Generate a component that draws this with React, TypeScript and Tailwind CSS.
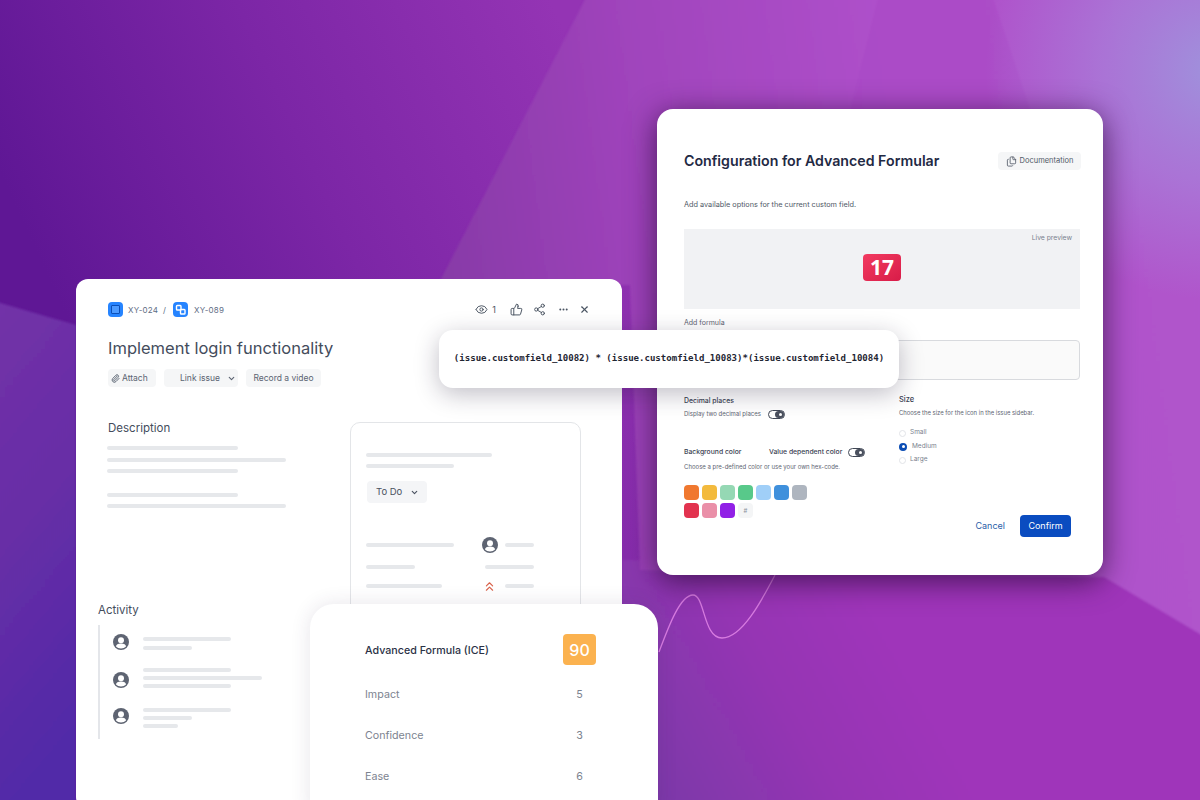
import { ChevronDown, ChevronsUp, Ellipsis, Eye, Files, Paperclip, Share2, ThumbsUp, X } from 'lucide-react';

function Line({ w, className = '' }: { w: string; className?: string }) {
  return <div className={`h-1 rounded-full bg-[#e6e8eb] ${w} ${className}`} />;
}

function Avatar() {
  return (
    <svg viewBox="0 0 16 16" className="w-4 h-4 shrink-0">
      <circle cx="8" cy="8" r="8" fill="#5e6472" />
      <circle cx="8" cy="6.2" r="3" fill="#fff" />
      <path d="M3 12.400c0-2 2-3 5-3s5 1 5 3c-1.200 1.300-3 2-5 2s-3.800-.7-5-2z" fill="#fff" />
    </svg>
  );
}

function Background() {
  return (
    <svg viewBox="0 0 1200 800" className="absolute inset-0 w-[1200px] h-[800px]">
      <defs>
        <linearGradient id="base" gradientUnits="userSpaceOnUse" x1="40" y1="260" x2="560" y2="20">
          <stop offset="0" stopColor="#5f1795" />
          <stop offset="0.5" stopColor="#7c26a6" />
          <stop offset="1" stopColor="#9434b4" />
        </linearGradient>
        <linearGradient id="lowLeft" x1="0" y1="0" x2="0.2" y2="1">
          <stop offset="0" stopColor="#7331a8" />
          <stop offset="0.5" stopColor="#672ea6" />
          <stop offset="1" stopColor="#512aa8" />
        </linearGradient>
        <linearGradient id="upper" gradientUnits="userSpaceOnUse" x1="438" y1="200" x2="1200" y2="100">
          <stop offset="0" stopColor="#883aa8" />
          <stop offset="0.27" stopColor="#a044bc" />
          <stop offset="0.6" stopColor="#ae50ca" />
          <stop offset="1" stopColor="#b055cc" />
        </linearGradient>
        <linearGradient id="lower" gradientUnits="userSpaceOnUse" x1="650" y1="800" x2="900" y2="660">
          <stop offset="0" stopColor="#7b38a8" />
          <stop offset="0.6" stopColor="#9636b4" />
          <stop offset="1" stopColor="#9f34ba" />
        </linearGradient>
        <radialGradient id="blue" gradientUnits="userSpaceOnUse" cx="1215" cy="70" r="230">
          <stop offset="0" stopColor="#9f92dc" />
          <stop offset="0.5" stopColor="#a880da" stopOpacity="0.7" />
          <stop offset="1" stopColor="#a880da" stopOpacity="0" />
        </radialGradient>
        <filter id="soft">
          <feGaussianBlur stdDeviation="1" />
        </filter>
      </defs>
      <rect width="1200" height="800" fill="url(#base)" />
      <g filter="url(#soft)">
        <polygon points="-10,300 76,325 76,810 -10,810" fill="url(#lowLeft)" />
        <rect x="622" y="560" width="590" height="250" fill="url(#lower)" />
        <polygon points="438,285 590,-10 1210,-10 1210,640 1104,577 640,570 630,285" fill="url(#upper)" />
        <polygon points="880,-10 850,110 1030,110 990,-10" fill="#a746c4" opacity="0.35" />
      </g>
      <rect x="940" y="0" width="260" height="320" fill="url(#blue)" />
      <path d="M659 652C668 628 680 595 693 595C705 595 703 638 722 638C742 638 762 600 775 575" fill="none" stroke="#d77be0" strokeWidth="1.300" />
    </svg>
  );
}

function IssueCard() {
  return (
    <div className="absolute left-[76px] top-[279px] w-[546px] h-[530px] rounded-xl bg-white font-['Inter',sans-serif] text-[#42526e] pl-8 pr-[32px] pt-[23px]">
      <div className="flex items-center h-[15px]">
        <span className="w-[15px] h-[15px] rounded-sm bg-[#2684ff] flex items-center justify-center">
          <span className="w-[9px] h-[9px] border-[1.5px] border-[#0b4fb8] bg-[#4c9aff] rounded-[1px]" />
        </span>
        <span className="ml-[5px] text-[8px] tracking-[0.2px] text-[#5e6c84]">XY-024</span>
        <span className="ml-[5px] text-[8px] text-[#5e6c84]">/</span>
        <span className="ml-[7px] w-[15px] h-[15px] rounded-sm bg-[#2684ff] flex items-center justify-center">
          <svg viewBox="0 0 15 15" className="w-[15px] h-[15px]" fill="none" stroke="#fff" strokeWidth="1.400">
            <rect x="3.500" y="3.500" width="4.500" height="4.500" rx="0.800" />
            <rect x="7.500" y="7.500" width="4.500" height="4.500" rx="0.800" />
          </svg>
        </span>
        <span className="ml-[6px] text-[8px] tracking-[0.2px] text-[#5e6c84]">XY-089</span>
        <div className="ml-auto flex items-center text-[#4b5563]">
          <Eye className="w-[13px] h-[13px]" strokeWidth={1.8} />
          <span className="ml-[4px] text-[9px]">1</span>
          <ThumbsUp className="ml-[14px] w-[13px] h-[13px]" strokeWidth={1.8} />
          <Share2 className="ml-[10px] w-[13px] h-[13px]" strokeWidth={1.8} />
          <Ellipsis className="ml-[12px] w-[11px] h-[11px]" strokeWidth={2.4} />
          <X className="ml-[10px] w-[11px] h-[11px]" strokeWidth={2.4} />
        </div>
      </div>

      <h1 className="mt-[19px] text-[16.500px] leading-[24px] text-[#444c5c]">Implement login functionality</h1>

      <div className="mt-[9px] flex gap-2 text-[8.500px] text-[#5b6472]">
        <div className="h-[18px] w-12 rounded bg-[#f5f6f7] flex items-center pl-[3px] gap-[2px]">
          <Paperclip className="w-[9px] h-[9px]" strokeWidth={2.5} />
          <span>Attach</span>
        </div>
        <div className="h-[18px] w-[74px] rounded bg-[#f5f6f7] flex items-center pl-[16px] gap-[7px]">
          <span>Link issue</span>
          <ChevronDown className="w-[9px] h-[9px]" strokeWidth={3} />
        </div>
        <div className="h-[18px] w-[75px] rounded bg-[#f5f6f7] flex items-center justify-center">Record a video</div>
      </div>

      <div className="mt-[27px] flex justify-between">
        <div>
          <h2 className="text-[11.500px] leading-[28px] text-[#444c5c]">Description</h2>
          <div className="mt-[4px] flex flex-col gap-[7.500px] -ml-px">
            <Line w="w-[131px]" />
            <Line w="w-[179px]" />
            <Line w="w-[131px]" />
            <Line w="w-[131px]" className="mt-[12px]" />
            <Line w="w-[179px]" />
          </div>

          <div className="-ml-[10px] mt-[92px]">
            <h2 className="text-[11.500px] leading-[20px] text-[#444c5c]">Activity</h2>
            <div className="mt-[5px] w-[200px] border-l-2 border-[#e4e6ea] pl-[13px] pt-[9px] h-[114px] flex flex-col gap-[18px]">
              <div className="flex gap-[14px]">
                <Avatar />
                <div className="pt-[3px] flex flex-col gap-[4.500px]">
                  <Line w="w-[88px]" />
                  <Line w="w-[49px]" />
                </div>
              </div>
              <div className="flex gap-[14px] items-center">
                <div className="mt-1"><Avatar /></div>
                <div className="flex flex-col gap-[4px]">
                  <Line w="w-[88px]" />
                  <Line w="w-[119px]" />
                  <Line w="w-[88px]" />
                </div>
              </div>
              <div className="flex gap-[14px] items-center -mt-[2px]">
                <Avatar />
                <div className="flex flex-col gap-[4px] pt-[4px]">
                  <Line w="w-[88px]" />
                  <Line w="w-[49px]" />
                  <Line w="w-[35px]" />
                </div>
              </div>
            </div>
          </div>
        </div>

        <div className="mt-[8px] mr-[9px] w-[231px] h-[200px] rounded-t-[10px] border border-[#e3e5e8] px-[15px] pt-[30px]">
          <Line w="w-[126px]" />
          <Line w="w-[88px]" className="mt-[7px]" />
          <div className="mt-[13px] ml-px w-[60px] h-[22px] rounded-sm bg-[#f4f5f7] flex items-center pl-[9px] gap-[8px] text-[9.500px] text-[#4a5160]">
            <span>To Do</span>
            <ChevronDown className="w-[9px] h-[9px]" strokeWidth={3} />
          </div>
          <div className="mt-[34px] grid grid-cols-[115px_1fr] gap-y-[11.500px] items-center">
            <Line w="w-[88px]" className="bg-[#e6e6f2]" />
            <div className="flex items-center h-4 pl-px gap-[7px]">
              <Avatar />
              <Line w="w-[29px]" />
            </div>
            <Line w="w-[49px]" />
            <div className="flex justify-end pr-[31px]"><Line w="w-[49px]" /></div>
            <Line w="w-[76px]" />
            <div className="flex items-center h-[12px] gap-[8px] pl-px">
              <ChevronsUp className="w-[15px] h-[15px] text-[#d9634c]" strokeWidth={1.800} />
              <Line w="w-[29px]" />
            </div>
          </div>
        </div>
      </div>
    </div>
  );
}

const swatchesTop = ['bg-[#f0782f]', 'bg-[#f3ba3d]', 'bg-[#95d8b4]', 'bg-[#58c98a]', 'bg-[#a0cff8]', 'bg-[#3f90dc]', 'bg-[#aeb5bf]'];
const swatchesBottom = ['bg-[#e2334f]', 'bg-[#ea8fa8]', 'bg-[#9120e6]'];

function Toggle() {
  return (
    <span className="w-[17px] h-[9px] rounded-full border border-[#3f4654] bg-white relative flex items-center shrink-0">
      <span className="absolute right-0 w-[9px] h-[7px] rounded-full bg-[#4a505e]" />
      <span className="absolute right-[2px] w-[3px] h-[3px] rounded-full bg-white" />
    </span>
  );
}

function ConfigCard() {
  return (
    <div className="absolute left-[657px] top-[109px] w-[446px] h-[466px] rounded-2xl bg-white font-['Inter',sans-serif] shadow-[0_6px_30px_rgba(40,10,55,0.75)] pl-[27px] pr-[23px] pt-[43px]">
      <div className="flex items-center justify-between">
        <h1 className="text-[14.200px] leading-[18px] font-semibold text-[#1f2a44]">Configuration for Advanced Formular</h1>
        <div className="-mr-px w-[83px] h-[18px] rounded bg-[#f5f6f7] flex items-center justify-center gap-[3px] text-[7.500px] text-[#505866]">
          <Files className="w-[11px] h-[11px]" strokeWidth={1.8} />
          <span>Documentation</span>
        </div>
      </div>
      <p className="mt-[30px] text-[7.300px] leading-[10px] text-[#505866]">Add available options for the current custom field.</p>
      <div className="mt-[19px] h-[80px] bg-[#f1f2f4] flex flex-col">
        <div className="text-right text-[6.800px] leading-[10px] pt-[4px] pr-[8px] text-[#7a818e]">Live preview</div>
        <div className="mt-[11px] self-center w-[38px] h-[27px] rounded-sm bg-gradient-to-br from-[#f23a60] to-[#d81b48] flex items-center justify-center text-[21px] font-bold text-white font-['Noto_Sans',sans-serif]">17</div>
      </div>
      <div className="mt-[9px] text-[7px] leading-[10px] text-[#5e6472]">Add formula</div>
      <div className="mt-[12px] h-[40px] rounded-sm border border-[#d8dade] bg-[#fafafa]" />

      <div className="mt-[14px] flex">
        <div className="w-[215px]">
          <div className="text-[6.900px] leading-[14px] font-medium text-[#3a4252]">Decimal places</div>
          <div className="-mt-px flex items-center gap-[7px] text-[6px] leading-[14px] text-[#5e6472]">
            <span>Display two decimal places</span>
            <Toggle />
          </div>
          <div className="mt-[24px] flex items-center text-[6.800px] leading-[14px] font-medium text-[#3a4252]">
            <span className="w-[85px]">Background color</span>
            <span>Value dependent color</span>
            <span className="ml-[6px]"><Toggle /></span>
          </div>
          <div className="text-[6px] leading-[16px] text-[#5e6472]">Choose a pre-defined color or use your own hex-code.</div>
          <div className="mt-[10px] flex gap-[3px]">
            {swatchesTop.map((c) => <span key={c} className={`w-[15px] h-[15px] rounded-sm ${c}`} />)}
          </div>
          <div className="mt-[3px] flex gap-[3px]">
            {swatchesBottom.map((c) => <span key={c} className={`w-[15px] h-[15px] rounded-sm ${c}`} />)}
            <span className="w-[15px] h-[15px] rounded-sm bg-[#f4f5f6] flex items-center justify-center text-[6px] text-[#8a909b]">#</span>
          </div>
        </div>
        <div className="flex-1 -mt-[1px]">
          <div className="text-[7.500px] leading-[14px] font-medium text-[#3a4252]">Size</div>
          <div className="text-[5.900px] leading-[12px] text-[#5e6472]">Choose the size for the icon in the issue sidebar.</div>
          <div className="mt-[10px] flex flex-col gap-[5.500px] text-[6.500px] text-[#7b828e]">
            <div className="flex items-center gap-[4px] h-2"><span className="w-[7px] h-[7px] rounded-full border border-[#e2e4e8]" />Small</div>
            <div className="flex items-center gap-[5px] h-2"><span className="w-2 h-2 rounded-full bg-[#0a4cb4] flex items-center justify-center"><span className="w-[3px] h-[3px] rounded-full bg-white" /></span>Medium</div>
            <div className="flex items-center gap-[4px] h-2"><span className="w-[7px] h-[7px] rounded-full border border-[#e2e4e8]" />Large</div>
          </div>
          <div className="mt-[51px] flex items-center justify-end pr-[9px] gap-[15px] text-[9px]">
            <span className="text-[#2a5ea8]">Cancel</span>
            <span className="w-[51px] h-[22px] rounded-sm bg-[#0a4cc0] text-white flex items-center justify-center">Confirm</span>
          </div>
        </div>
      </div>
    </div>
  );
}

function FormulaPill() {
  return (
    <div className="absolute left-[439px] top-[330px] w-[460px] h-[58px] rounded-[14px] bg-white shadow-[0_6px_24px_rgba(30,20,50,0.28)] flex items-center justify-center font-['DejaVu_Sans_Mono',monospace] font-bold text-[9.050px] text-[#1f2633]">
      (issue.customfield_10082) * (issue.customfield_10083)*(issue.customfield_10084)
    </div>
  );
}

const scores = [
  { label: 'Impact', value: 5 },
  { label: 'Confidence', value: 3 },
  { label: 'Ease', value: 6 },
];

function ScoreCard() {
  return (
    <div className="absolute left-[310px] top-[604px] w-[348px] h-[210px] rounded-t-[24px] bg-white shadow-[0_0_20px_rgba(60,40,80,0.12)] pl-[55px] pr-[62px] pt-[30px] font-['Inter',sans-serif]">
      <div className="flex items-center justify-between">
        <span className="mt-[4px] text-[10.700px] font-medium text-[#2a3145]">Advanced Formula (ICE)</span>
        <span className="w-[33px] h-[31px] rounded-sm bg-[#fbb24f] flex items-center justify-center text-[16px] font-medium text-white">90</span>
      </div>
      <div className="mt-[22px] flex flex-col gap-[25px] text-[10.700px] leading-[16px] text-[#7d8390]">
        {scores.map((s) => (
          <div key={s.label} className="flex justify-between">
            <span>{s.label}</span>
            <span className="w-[33px] text-center">{s.value}</span>
          </div>
        ))}
      </div>
    </div>
  );
}

export default function App() {
  return (
    <div className="relative w-[1200px] h-[800px] overflow-hidden">
      <Background />
      <IssueCard />
      <ConfigCard />
      <ScoreCard />
      <FormulaPill />
    </div>
  );
}
